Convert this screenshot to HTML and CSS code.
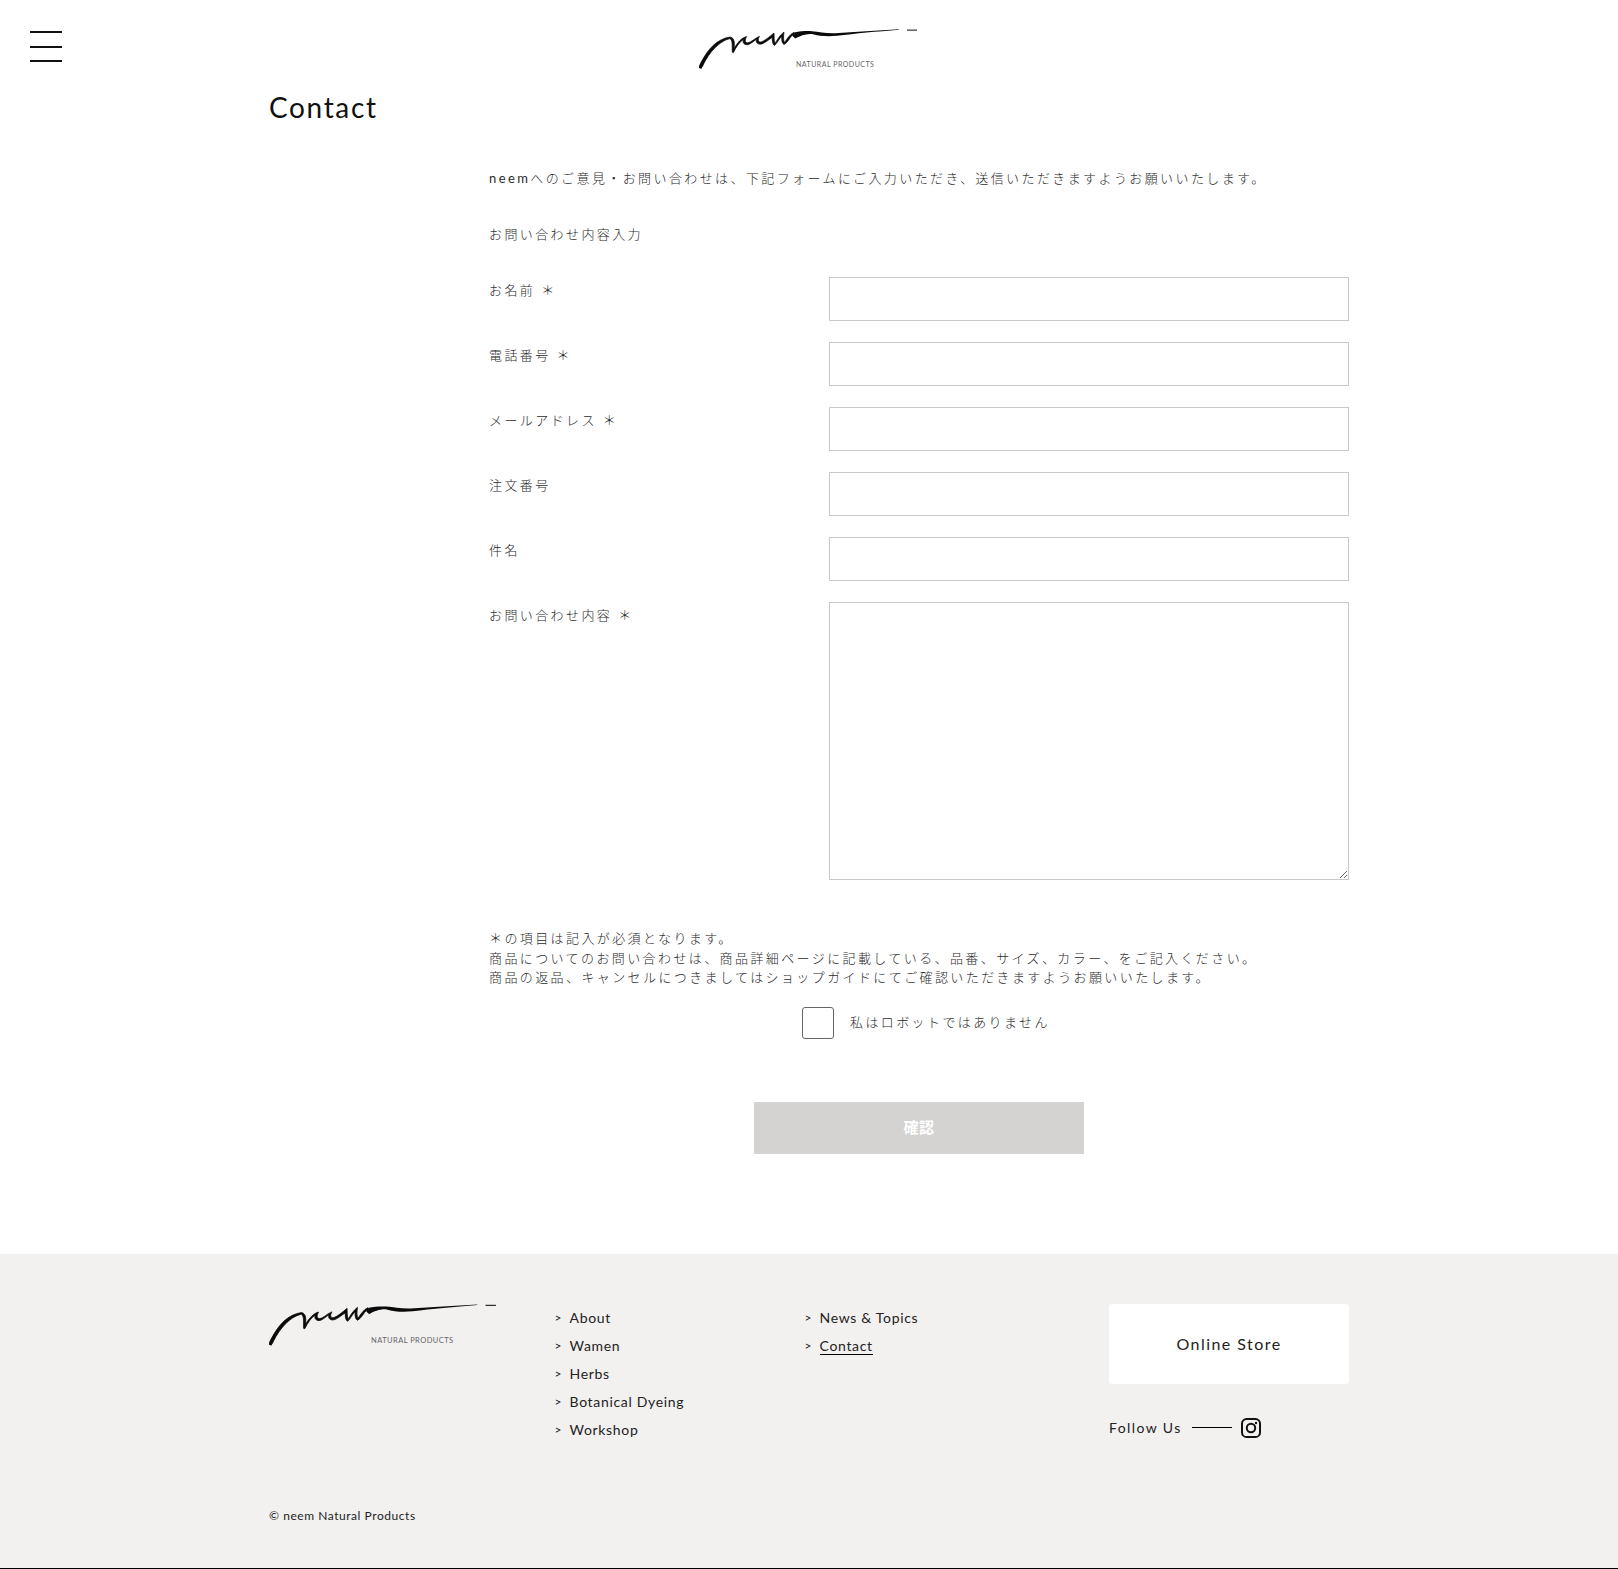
FILE: index.html
```html
<!DOCTYPE html>
<html lang="ja">
<head>
<meta charset="utf-8">
<title>Contact | neem Natural Products</title>
<link rel="stylesheet" href="styles.css">
</head>
<body>
<svg class="sprite" width="0" height="0" aria-hidden="true">
  <symbol id="neem-mark" viewBox="0 0 220 42">
    <path class="mark-ink" d="M0.6 39.6C0 38.6 1.4 36 3 33C9 21 18 11 31 9C34 9.4 35.4 12 35.4 16L35 20.5C38.5 14.5 43 9.6 47.6 8.6C46 11.5 45.6 14.6 48.5 14.8C52 14.6 56.5 9.6 60.5 8.4C58.8 11 58.6 13.8 61.5 14C65 13.6 70 9 75 5C75.3 8.6 74.8 12 76 15.5C78 12 81 7 85 4C84.6 8 84 12 85.5 14.5C88 11 91 6 95 4.4C95.5 6 96 8 97.5 8.2L97 10C94.6 9.8 94 8 93.6 7C91 9 88.6 15 85 16.5C83 15.5 82.4 12 82.8 8.5C80 10.5 78 15.5 75.5 17.5C73.6 16.5 73.2 13 73.2 9.5C69 12 65 16 61 16.2C57.6 16 56.6 13.4 57.6 11.2C54.6 13 51 16.8 48 16.8C44.4 16.6 43.4 14 44.4 11.4C40.6 14 37 19 34.4 24.6L33.2 24.2C33 19 34 12.4 31 10.6C20 13 10 25 4.6 36C3.6 38.6 2 40.6 0.6 39.6Z"/>
    <path d="M0 40C0 37 3 32 6 28L8.5 29.5C5.5 33 3.8 37 2.6 40.8Z"/>
    <path d="M95 4.6C102 3 108 3 113 3.2C120 3.6 127 5.6 136 5.2C156 3.8 178 2.4 200 1.2L200 1.8C178 3.6 156 5.6 138 7.8C128 8.8 120 8 113 6C107 5.4 101 8 97 10Z"/>
    <path d="M208 1.6H218V2.6H208Z"/>
  </symbol>
</svg>

<header class="site-header">
  <button class="menu-button" type="button" aria-label="Menu"><span></span><span></span><span></span></button>
  <a class="logo" href="#">
    <svg class="logo-mark" aria-hidden="true"><use href="#neem-mark"/></svg>
    <span class="logo-tag">NATURAL PRODUCTS</span>
  </a>
</header>

<main class="page">
  <h1 class="page-title">Contact</h1>
  <form class="contact-form">
    <p class="intro"><span class="brand">neem</span>へのご意見・お問い合わせは、下記フォームにご入力いただき、送信いただきますようお願いいたします。</p>
    <p class="form-heading">お問い合わせ内容入力</p>
    <div class="fields">
      <label class="field"><span class="field-label">お名前 ＊</span><input class="field-input" type="text"></label>
      <label class="field"><span class="field-label">電話番号 ＊</span><input class="field-input" type="tel"></label>
      <label class="field"><span class="field-label">メールアドレス ＊</span><input class="field-input" type="email"></label>
      <label class="field"><span class="field-label">注文番号</span><input class="field-input" type="text"></label>
      <label class="field"><span class="field-label">件名</span><input class="field-input" type="text"></label>
      <label class="field"><span class="field-label">お問い合わせ内容 ＊</span><textarea class="field-input field-textarea"></textarea></label>
    </div>
    <p class="notes">＊の項目は記入が必須となります。<br>商品についてのお問い合わせは、商品詳細ページに記載している、品番、サイズ、カラー、をご記入ください。<br>商品の返品、キャンセルにつきましてはショップガイドにてご確認いただきますようお願いいたします。</p>
    <label class="robot"><span class="robot-box"></span><span>私はロボットではありません</span></label>
    <button class="submit" type="button">確認</button>
  </form>
</main>

<footer class="site-footer">
  <div class="footer-inner">
    <a class="logo logo-footer" href="#">
      <svg class="logo-mark" aria-hidden="true"><use href="#neem-mark"/></svg>
      <span class="logo-tag">NATURAL PRODUCTS</span>
    </a>
    <ul class="footer-links">
      <li><a href="#">About</a></li>
      <li><a href="#">Wamen</a></li>
      <li><a href="#">Herbs</a></li>
      <li><a href="#">Botanical Dyeing</a></li>
      <li><a href="#">Workshop</a></li>
    </ul>
    <ul class="footer-links">
      <li><a href="#">News &amp; Topics</a></li>
      <li><a class="current" href="#">Contact</a></li>
    </ul>
    <div class="footer-side">
      <a class="store" href="#">Online Store</a>
      <div class="follow">
        <span>Follow Us</span>
        <span class="follow-line"></span>
        <svg class="insta" viewBox="0 0 20 20" aria-hidden="true">
          <rect x="1" y="1" width="18" height="18" rx="4.6"/>
          <circle cx="10" cy="10" r="4.2"/>
          <circle class="insta-dot" cx="15" cy="5" r="1.2"/>
        </svg>
      </div>
    </div>
  </div>
  <p class="copyright">© neem Natural Products</p>
</footer>
</body>
</html>
```
FILE: styles.css
```css
* { box-sizing: border-box; }
html, body { margin: 0; padding: 0; }
body {
  background: #fff;
  color: #2b2b2b;
  font-family: Lato, "Noto Sans CJK JP", sans-serif;
  font-size: 13px;
  font-weight: 300;
  line-height: 19.5px;
  letter-spacing: 2.4px;
}
a { color: inherit; text-decoration: none; }
p, h1, ul { margin: 0; padding: 0; }
.sprite { position: absolute; }
.brand { font-weight: 400; }

.site-header {
  position: relative;
  height: 87px;
  padding-top: 28px;
  display: flex;
  justify-content: center;
}
.menu-button {
  position: absolute;
  left: 30px;
  top: 31px;
  width: 32px;
  height: 31px;
  padding: 0;
  border: 0;
  background: none;
  display: flex;
  flex-direction: column;
  justify-content: space-between;
}
.menu-button span { display: block; height: 2px; background: #111; }

.logo { display: block; position: relative; width: 220px; height: 42px; }
.logo-mark { display: block; width: 100%; height: 100%; fill: #0a0a0a; }
.mark-ink { stroke: #0a0a0a; stroke-width: 0.7; stroke-linejoin: round; }
.logo-tag {
  position: absolute;
  left: 97px;
  top: 29.5px;
  font-family: Lato, sans-serif;
  font-size: 7px;
  font-weight: 400;
  line-height: 12px;
  letter-spacing: 0.5px;
  color: #666;
  white-space: nowrap;
}

.page { width: 1080px; margin: 0 auto; }
.page-title {
  font-size: 28px;
  font-weight: 400;
  line-height: 40px;
  letter-spacing: 1.65px;
  color: #111;
}
.contact-form { width: 860px; margin: 42px 0 0 220px; }
.form-heading { margin-top: 36px; }
.fields { margin-top: 33px; display: flex; flex-direction: column; gap: 21px; }
.field { display: flex; }
.field-label { width: 340px; padding-top: 4px; }
.field-input {
  display: block;
  width: 520px;
  height: 44px;
  margin: 0;
  border: 1px solid #c9c9c9;
  border-radius: 0;
  background: #fff;
}
.field-textarea { height: 278px; }
.notes { margin-top: 49px; }
.robot {
  display: flex;
  align-items: center;
  gap: 16px;
  margin: 19px 0 0 313px;
}
.robot-box {
  width: 32px;
  height: 32px;
  border: 1px solid #666;
  border-radius: 3px;
  background: #fff;
}
.submit {
  display: block;
  width: 330px;
  height: 52px;
  margin: 63px auto 100px;
  padding: 0 0 3px;
  border: 0;
  background: #d5d3d2;
  color: #fff;
  font-family: "Noto Sans CJK JP", sans-serif;
  font-size: 15px;
  font-weight: 700;
  letter-spacing: 0.5px;
}

.site-footer {
  background: #f2f1f0;
  border-bottom: 1px solid #000;
  height: 315px;
  padding-top: 50px;
  color: #222;
  font-size: 14px;
  font-weight: 400;
  line-height: 28px;
  letter-spacing: 0.68px;
}
.footer-inner {
  width: 1080px;
  margin: 0 auto;
  display: grid;
  grid-template-columns: 286px 250px 304px 240px;
  height: 153px;
}
.logo-footer { width: 229px; height: 44px; margin-top: -1px; }
.logo-footer .logo-tag { left: 102px; top: 32px; font-size: 7.5px; letter-spacing: 0.45px; }
.footer-links { list-style: none; }
.footer-links li { display: flex; }
.footer-links li::before { content: ">"; width: 15px; font-size: 12px; margin-left: -0.5px; }
.current { display: block; height: 23px; border-bottom: 1px solid #000; }
.footer-side { display: flex; flex-direction: column; }
.store {
  display: flex;
  align-items: center;
  justify-content: center;
  height: 80px;
  background: #fff;
  border-radius: 3px;
  font-size: 16px;
  letter-spacing: 1.45px;
}
.follow { display: flex; align-items: center; margin-top: 34px; height: 20px; letter-spacing: 1.4px; }
.follow-line { width: 40px; height: 1px; background: #000; margin: 0 9px 0 10px; }
.insta { width: 20px; height: 20px; fill: none; stroke: #111; stroke-width: 2; }
.insta-dot { fill: #111; stroke: none; }
.copyright {
  width: 1080px;
  margin: 0 auto;
  padding-top: 50px;
  font-size: 12px;
  line-height: 18px;
  letter-spacing: 0.55px;
}
```
